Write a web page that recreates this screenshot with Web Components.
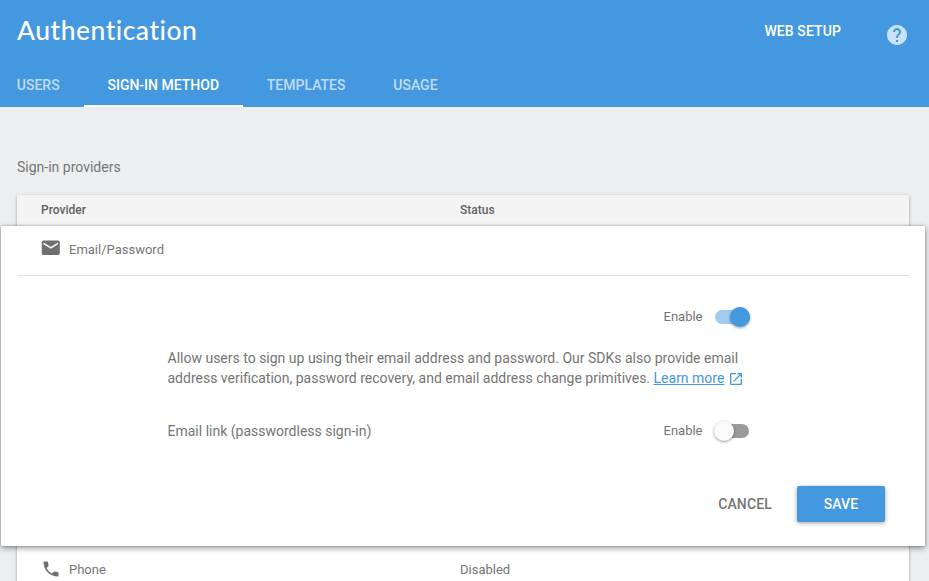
<!DOCTYPE html>
<html lang="en">
<head>
<meta charset="utf-8">
<title>Authentication</title>
<style>
html, body { margin: 0; height: 581px; overflow: hidden; }
body { font-family: Roboto, "Liberation Sans", sans-serif; font-size: 14px; color: #757575; background: #edeef0; }
</style>
</head>
<body>
<auth-page></auth-page>
<script>
const define = (name, html, setup) => customElements.define(name, class extends HTMLElement {
  constructor() {
    super();
    const t = document.createElement('template');
    t.innerHTML = html;
    this.attachShadow({ mode: 'open' }).append(t.content.cloneNode(true));
  }
  connectedCallback() { if (setup) setup(this); }
});

const icons = {
  mail: 'M20 4H4c-1.1 0-1.99.9-1.99 2L2 18c0 1.1.9 2 2 2h16c1.1 0 2-.9 2-2V6c0-1.1-.9-2-2-2zm0 4l-8 5-8-5V6l8 5 8-5v2z',
  phone: 'M6.62 10.79c1.44 2.83 3.76 5.14 6.59 6.59l2.2-2.2c.27-.27.67-.36 1.02-.24 1.12.37 2.33.57 3.57.57.55 0 1 .45 1 1V20c0 .55-.45 1-1 1-9.39 0-17-7.61-17-17 0-.55.45-1 1-1h3.5c.55 0 1 .45 1 1 0 1.25.2 2.45.57 3.57.11.35.03.74-.25 1.02l-2.2 2.2z',
  help: 'M12 2C6.48 2 2 6.48 2 12s4.48 10 10 10 10-4.48 10-10S17.52 2 12 2zm1 17h-2v-2h2v2zm2.07-7.75l-.9.92C13.45 12.9 13 13.5 13 15h-2v-.5c0-1.1.45-2.1 1.17-2.83l1.24-1.26c.37-.36.59-.86.59-1.41 0-1.1-.9-2-2-2s-2 .9-2 2H8c0-2.21 1.79-4 4-4s4 1.79 4 4c0 .88-.36 1.68-.93 2.25z',
  open: 'M19 19H5V5h7V3H5c-1.11 0-2 .9-2 2v14c0 1.1.89 2 2 2h14c1.1 0 2-.9 2-2v-7h-2v7zM14 3v2h3.59l-9.83 9.83 1.41 1.41L19 6.41V10h2V3h-7z'
};
define('ui-icon', `<style>:host{display:inline-block;width:24px;height:24px;flex:none}svg{display:block;width:100%;height:100%;fill:currentColor}</style>
<svg viewBox="0 0 24 24"><path/></svg>`, el => el.shadowRoot.querySelector('path').setAttribute('d', icons[el.getAttribute('name')]));

define('tab-item', `<style>
:host{display:flex;align-items:center;box-sizing:border-box;height:43px;padding:1px 24px 0 23.8px;border-bottom:2px solid transparent;color:rgba(255,255,255,.68);font-weight:500;white-space:nowrap}
:host([active]){color:#fff;border-bottom-color:#fff}
</style><slot></slot>`);

define('page-header', `<style>
:host{display:flex;flex-direction:column;justify-content:space-between;height:107px;background:#4398e0;color:#fff}
.top{display:flex;align-items:flex-start}
h1{margin:13px auto 0 17px;font:500 26.5px/34px Lato,sans-serif;letter-spacing:.5px}
.setup{margin:21px 44px 0 0;font-weight:500;line-height:20px;letter-spacing:.1px}
ui-icon{margin:23px 20px 0 0;color:rgba(255,255,255,.72)}
nav{display:flex;margin-left:-7px}
</style>
<div class="top"><h1>Authentication</h1><span class="setup">WEB SETUP</span><ui-icon name="help"></ui-icon></div>
<nav><slot></slot></nav>`);

define('toggle-switch', `<style>
:host{display:flex;align-items:center;justify-content:space-between;width:87px;height:20px;font-size:13px}
span{padding-bottom:2px}
.track{display:flex;align-items:center;width:34px;height:14px;border-radius:7px;background:#9b9b9b;margin-right:1.5px}
.thumb{width:20px;height:20px;border-radius:50%;background:#fafafa;box-shadow:0 1px 3px rgba(0,0,0,.4);margin-left:-1px;flex:none}
:host([on]) .track{background:#a1cbef;margin-right:.5px;width:35px}
:host([on]) .thumb{background:#4398e0;margin-left:15px}
</style><span><slot></slot></span><div class="track"><div class="thumb"></div></div>`);

define('flat-button', `<style>
:host{display:flex;align-items:center;justify-content:center;box-sizing:border-box;height:36px;border-radius:2px;font-weight:500;letter-spacing:.15px}
:host([raised]){width:88px;background:#4398e0;color:#fff;box-shadow:0 1px 4px rgba(0,0,0,.38)}
</style><slot></slot>`);

define('provider-row', `<style>
:host{display:grid;grid-template-columns:419px 1fr;align-items:center;padding:0 0 2px 24px;box-sizing:border-box;height:49px;font-size:13px}
.name{display:flex;align-items:center;gap:8px}
ui-icon{width:20px;height:20px;color:#6f6f6f;margin-bottom:2px}
ui-icon[name=mail]{width:21.6px;height:21.6px;margin:0 -.8px 2.5px}
</style><div class="name"><ui-icon></ui-icon><span><slot></slot></span></div><slot name="status"></slot>`,
el => { const i = el.shadowRoot.querySelector('ui-icon'); i.setAttribute('name', el.getAttribute('icon')); i.shadowRoot.querySelector('path').setAttribute('d', icons[el.getAttribute('icon')]); });

define('provider-editor', `<style>
:host{display:block;position:relative;z-index:1;box-sizing:border-box;height:320px;margin:0 -16px;padding:0 16px;background:#fff;box-shadow:0 0 2px rgba(0,0,0,.25),0 2px 6px rgba(0,0,0,.42)}
.row{border-bottom:1px solid #e0e0e0}
.form{width:583px;margin:31px 0 0 150.5px}
toggle-switch{margin-left:auto}
p{margin:21px 0 0;line-height:20px;white-space:nowrap}
a{color:#4398e0;text-decoration:underline}
a+ui-icon{width:16px;height:16px;color:#4398e0;margin-left:0;vertical-align:-4px}
.link{display:flex;align-items:center;margin-top:33px;height:20px}
.actions{display:flex;justify-content:flex-end;gap:25px;margin:45px 24px 0 0}
</style>
<div class="row"><slot></slot></div>
<div class="form">
<toggle-switch on>Enable</toggle-switch>
<p><span>Allow users to sign up using their email address and password. Our SDKs also provide email</span><br><span>address verification, password recovery, and email address change primitives.</span> <a>Learn more</a> <ui-icon name="open"></ui-icon></p>
<div class="link"><span>Email link (passwordless sign-in)</span><toggle-switch>Enable</toggle-switch></div>
</div>
<div class="actions"><flat-button>CANCEL</flat-button><flat-button raised>SAVE</flat-button></div>`);

define('provider-table', `<style>
:host{display:block;width:892px;margin-left:17px;background:#fff;box-shadow:0 1px 3px rgba(0,0,0,.35)}
header{display:grid;grid-template-columns:419px 1fr;align-items:center;box-sizing:border-box;height:31px;padding:0 0 2px 24px;background:#f4f4f4;color:#616161;font-size:12px;font-weight:500}
</style><header><span>Provider</span><span>Status</span></header><slot></slot>`);

define('auth-page', `<style>
:host{display:block;height:581px;overflow:hidden}
h2{margin:50px 0 18px 17px;font:400 14px/20px Roboto,sans-serif}
</style>
<page-header><tab-item>USERS</tab-item><tab-item active>SIGN-IN METHOD</tab-item><tab-item>TEMPLATES</tab-item><tab-item>USAGE</tab-item></page-header>
<h2>Sign-in providers</h2>
<provider-table>
<provider-editor><provider-row icon="mail">Email/Password</provider-row></provider-editor>
<provider-row icon="phone">Phone<span slot="status">Disabled</span></provider-row>
</provider-table>`);
</script>
</body>
</html>
